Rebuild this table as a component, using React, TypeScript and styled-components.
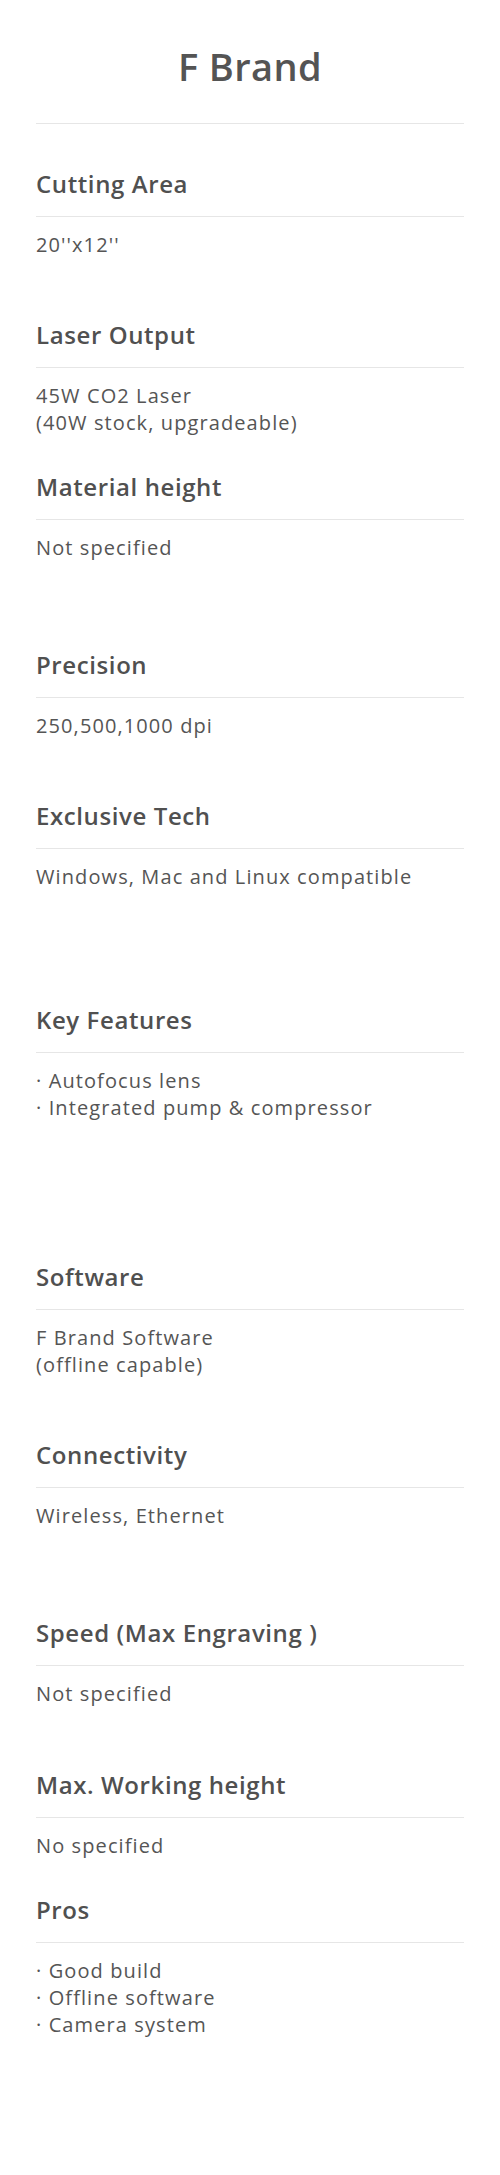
import React from "react";
import styled, { createGlobalStyle } from "styled-components";

const specs = [
    { title: "Cutting Area", height: 151, lines: ["20''x12''"] },
    { title: "Laser Output", height: 152, lines: ["45W CO2 Laser", "(40W stock, upgradeable)"] },
    { title: "Material height", height: 178, lines: ["Not specified"] },
    { title: "Precision", height: 151, lines: ["250,500,1000 dpi"] },
    { title: "Exclusive Tech", height: 204, lines: ["Windows, Mac and Linux compatible"] },
    { title: "Key Features", height: 257, lines: ["· Autofocus lens", "· Integrated pump & compressor"] },
    { title: "Software", height: 178, lines: ["F Brand Software", "(offline capable)"] },
    { title: "Connectivity", height: 178, lines: ["Wireless, Ethernet"] },
    { title: "Speed (Max Engraving )", height: 152, lines: ["Not specified"] },
    { title: "Max. Working height", height: 125, lines: ["No specified"] },
    { title: "Pros", height: 0, lines: ["· Good build", "· Offline software", "· Camera system"] },
];

const App = () => {
    return (
        <>
            <GlobalStyle />
            <Page>
                <Brand>F Brand</Brand>
                <Rule />
                <List>
                    {specs.map((s) => (
                        <Spec key={s.title} h={s.height}>
                            <SpecTitle>{s.title}</SpecTitle>
                            <Rule />
                            <SpecValue>
                                {s.lines.map((l) => (
                                    <div key={l}>{l}</div>
                                ))}
                            </SpecValue>
                        </Spec>
                    ))}
                </List>
            </Page>
        </>
    );
};

export default App;

const GlobalStyle = createGlobalStyle`
body {
    margin: 0;
    background: #ffffff;
    font-family: "Open Sans", "Noto Sans", sans-serif;
}
`;

const Page = styled.div`
width: 100%;
min-height: 2175px;
padding: 44px 36px 0;
box-sizing: border-box;
color: #525252;
`;

const Brand = styled.h1`
margin: 0 0 33px;
font-size: 38px;
line-height: 1.2;
font-weight: 600;
letter-spacing: 0.4px;
text-align: center;
color: #545454;
`;

const Rule = styled.div`
height: 1px;
background-color: #e6e6e6;
`;

const List = styled.div`
padding-top: 46px;
display: flex;
flex-direction: column;
`;

const Spec = styled.section<{ h: number }>`
display: flex;
flex-direction: column;
height: ${(p) => (p.h ? `${p.h}px` : "auto")};
`;

const SpecTitle = styled.h2`
margin: 0 0 18px;
font-size: 24px;
line-height: 1.2;
font-weight: 600;
letter-spacing: 0.6px;
color: #505050;
`;

const SpecValue = styled.div`
margin-top: 15px;
font-size: 20px;
line-height: 26.7px;
font-weight: 400;
letter-spacing: 1.1px;
color: #555555;
`;
